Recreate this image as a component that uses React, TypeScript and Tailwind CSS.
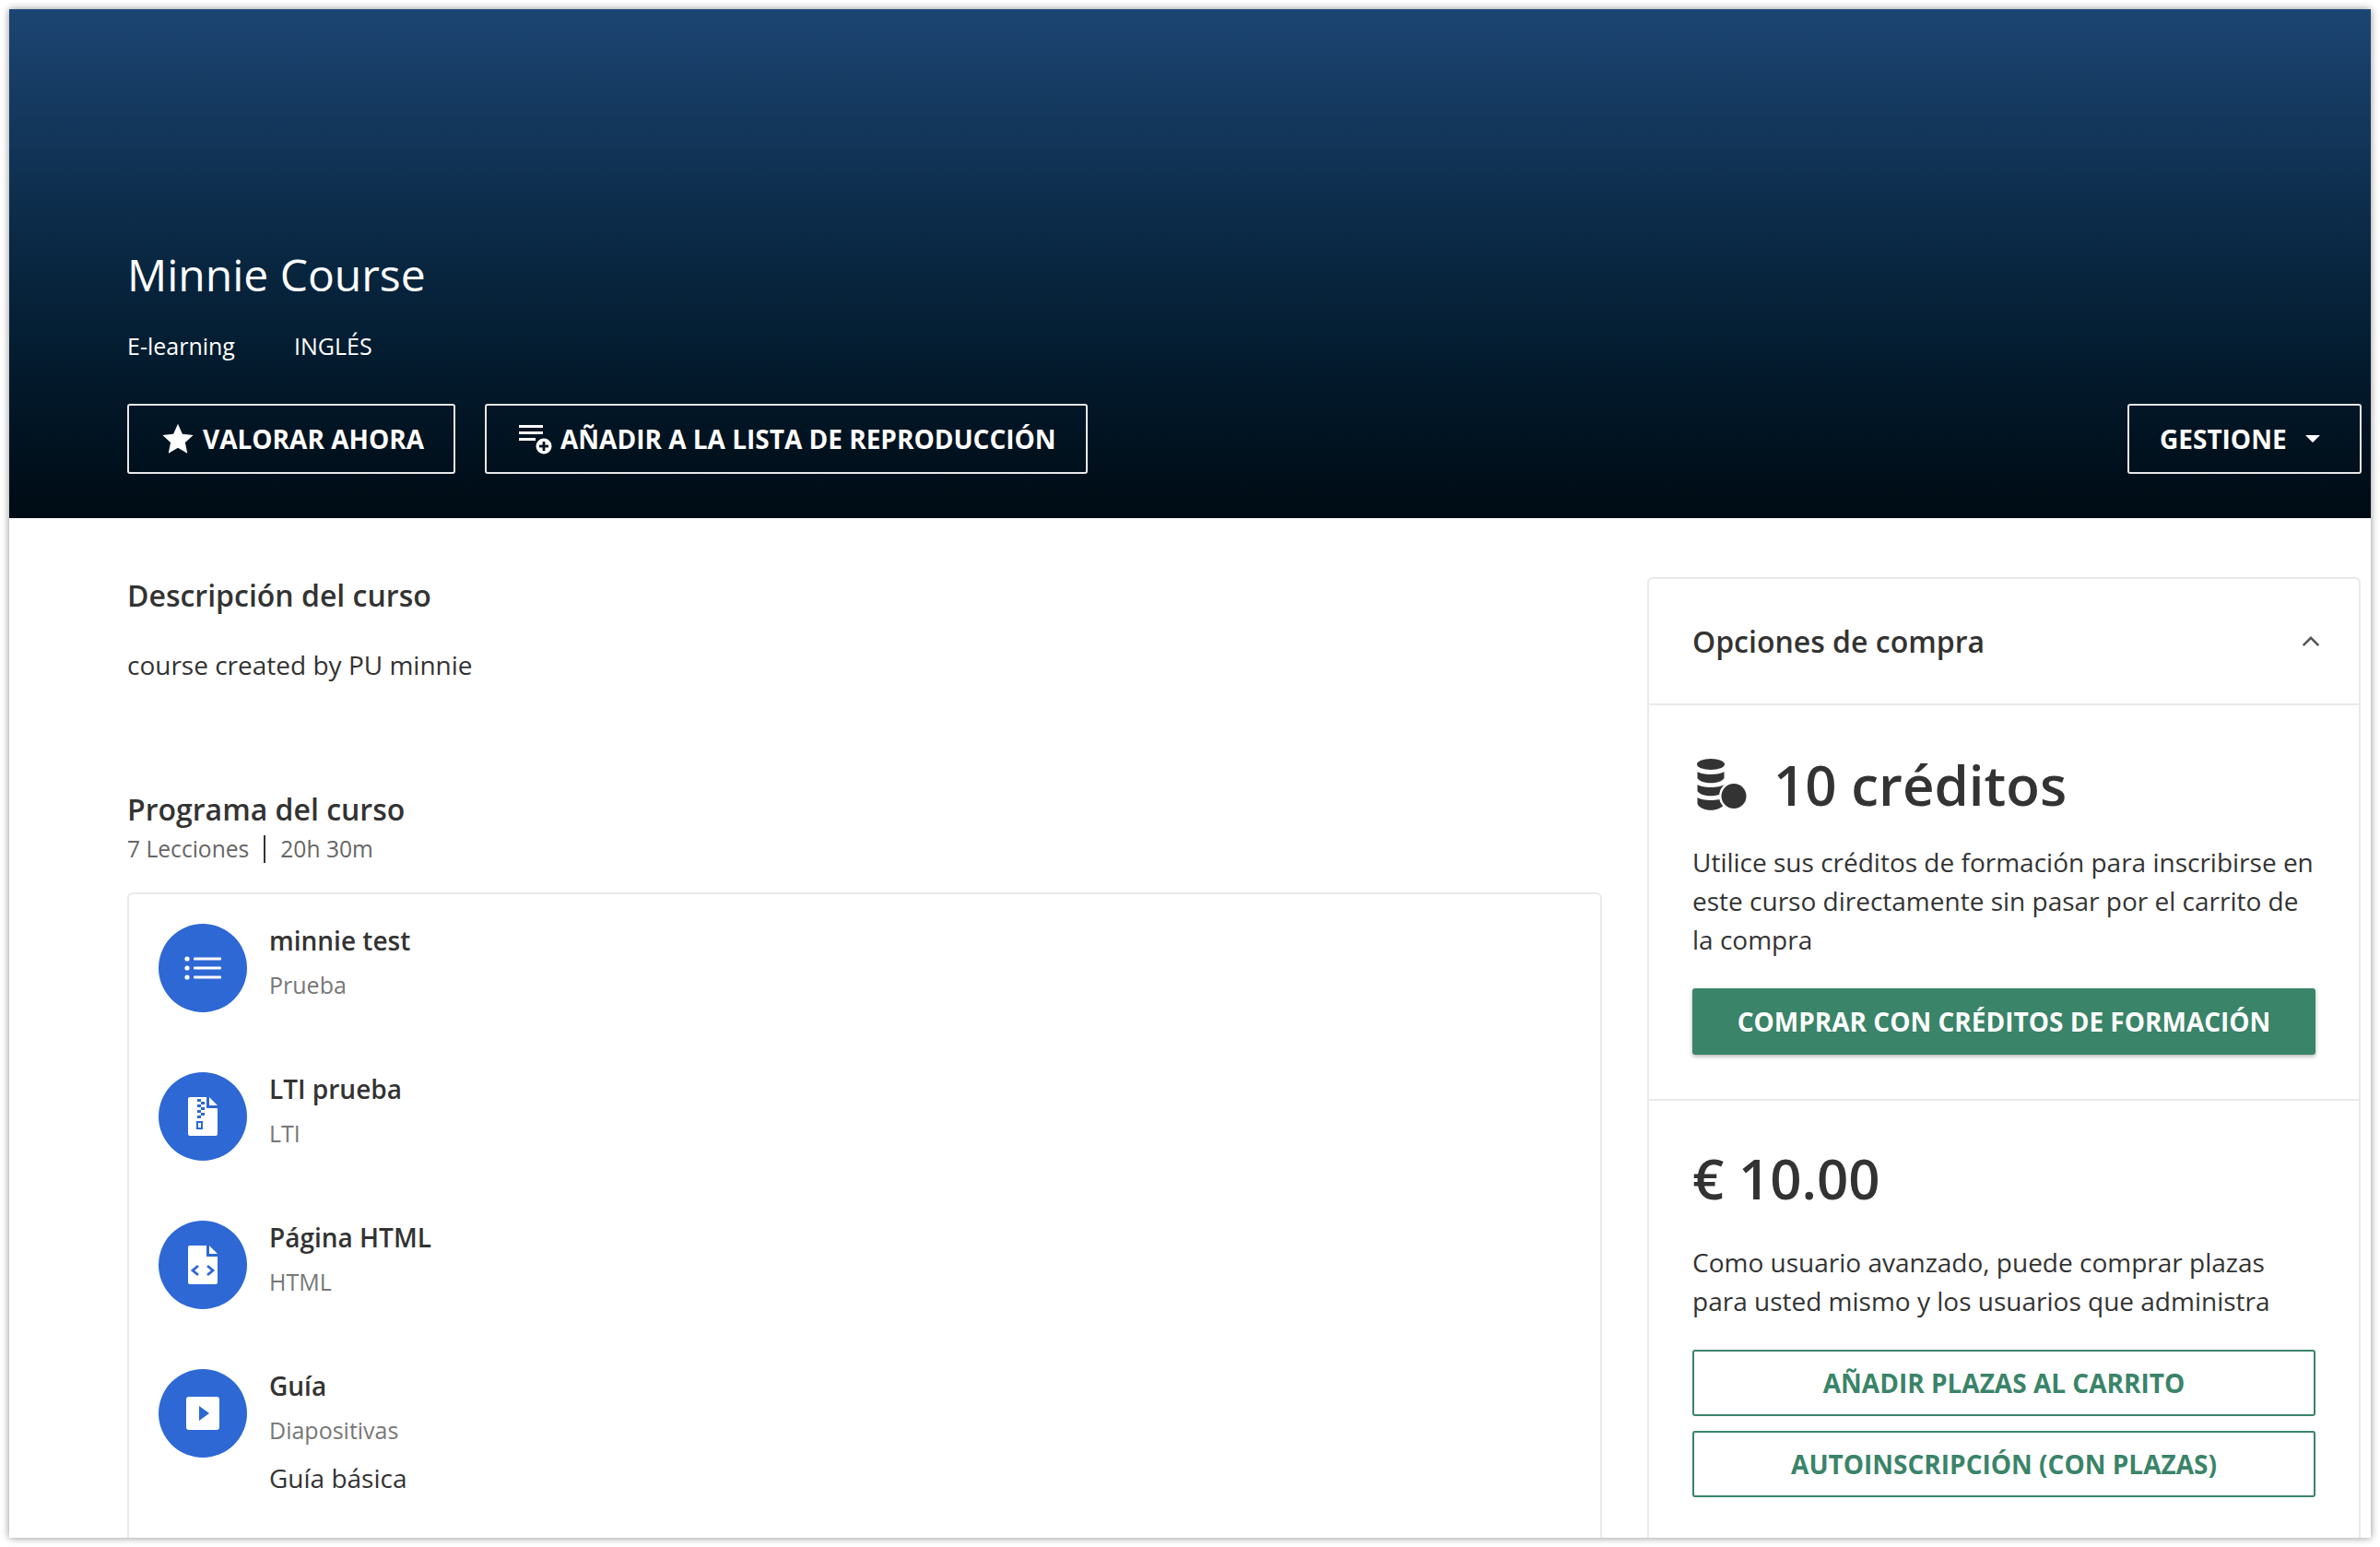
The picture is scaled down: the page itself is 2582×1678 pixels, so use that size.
const Star = () => (
  <svg viewBox="0 0 24 24" className="w-[38px] h-[38px] fill-white">
    <path d="M12 1.8l3.1 6.9 7.4.8-5.5 5 1.5 7.4L12 18.2l-6.5 3.7L7 14.5l-5.5-5 7.4-.8z" />
  </svg>
);

const PlaylistAdd = () => (
  <svg viewBox="0 0 36 36" className="w-[36px] h-[36px] fill-white">
    <rect x="0" y="3" width="26" height="3" />
    <rect x="0" y="10" width="26" height="3" />
    <rect x="0" y="17" width="18" height="3" />
    <circle cx="27" cy="26" r="8.5" />
    <rect x="22" y="24.6" width="10" height="2.8" fill="#04121f" />
    <rect x="25.6" y="21" width="2.8" height="10" fill="#04121f" />
  </svg>
);

const ListIcon = () => (
  <svg viewBox="0 0 40 26" className="w-[40px] h-[26px] fill-white">
    <circle cx="3" cy="3" r="2.6" />
    <rect x="10" y="1.5" width="30" height="3" rx="1" />
    <circle cx="3" cy="13" r="2.6" />
    <rect x="10" y="11.5" width="30" height="3" rx="1" />
    <circle cx="3" cy="23" r="2.6" />
    <rect x="10" y="21.5" width="30" height="3" rx="1" />
  </svg>
);

const ZipIcon = () => (
  <svg viewBox="0 0 32 42" className="w-[32px] h-[42px]">
    <path d="M2 0h18v12h12v28a2 2 0 0 1-2 2H2a2 2 0 0 1-2-2V2a2 2 0 0 1 2-2zM23 0l9 9h-9z" fill="#fff" />
    <path d="M10 2h4v3h-4zM14 5h4v3h-4zM10 8h4v3h-4zM14 11h4v3h-4zM10 14h4v3h-4zM14 17h4v3h-4zM10 20h4v3h-4z" fill="#2d68d4" />
    <path d="M9 26h7v9H9zM11 28v5h3v-5z" fill="#2d68d4" fillRule="evenodd" />
  </svg>
);

const CodeIcon = () => (
  <svg viewBox="0 0 32 42" className="w-[32px] h-[42px]">
    <path d="M2 0h18v12h12v28a2 2 0 0 1-2 2H2a2 2 0 0 1-2-2V2a2 2 0 0 1 2-2zM23 0l9 9h-9z" fill="#fff" />
    <path d="M11 22l-6 5 6 5M21 22l6 5-6 5" fill="none" stroke="#2d68d4" strokeWidth="2.8" />
  </svg>
);

const PlayIcon = () => (
  <svg viewBox="0 0 36 36" className="w-[36px] h-[36px]">
    <rect width="36" height="36" rx="3" fill="#fff" />
    <path d="M14 10l11 8-11 8z" fill="#2d68d4" />
  </svg>
);

const Coins = () => (
  <svg viewBox="0 0 56 56" className="w-[56px] h-[56px] fill-[#333333]">
    <ellipse cx="16" cy="6" rx="15" ry="6" />
    <path d="M1.5 14c5 4 24 4 29 0v7c-4 7-25 7-29 0z" />
    <path d="M1.5 28c5 4 24 4 29 0v7c-4 7-25 7-29 0z" />
    <path d="M1.5 42c5 4 24 4 29 0v7c-4 9-25 9-29 0z" />
    <circle cx="41" cy="40.5" r="16" fill="#fff" />
    <circle cx="41" cy="40.5" r="13.5" />
  </svg>
);

const lessons = [
  { title: "minnie test", kind: "Prueba", icon: <ListIcon /> },
  { title: "LTI prueba", kind: "LTI", icon: <ZipIcon /> },
  { title: "Página HTML", kind: "HTML", icon: <CodeIcon /> },
  { title: "Guía", kind: "Diapositivas", icon: <PlayIcon />, note: "Guía básica" },
];

const heroBtn =
  "h-[76px] flex items-center border-2 border-[#e6e8ea] rounded-[3px] text-white text-[28px] font-bold";
const outlineBtn =
  "h-[72px] flex items-center justify-center border-2 border-[#3a8469] rounded-[3px] text-[#3a8469] text-[28px] font-bold";

export default function App() {
  return (
    <div className="w-[2582px] h-[1678px] p-[10px] bg-white overflow-hidden font-['Open_Sans',sans-serif] text-[#333333]">
      <div className="h-[1658px] overflow-hidden bg-white shadow-[0_0_8px_rgba(0,0,0,0.45)]">
        <div className="h-[552px] px-[128px] pr-[10px] pb-[48px] flex flex-col justify-end bg-gradient-to-b from-[#1c4573] to-[#000b14]">
          <h1 className="text-[48px] leading-[64px] font-medium text-white">Minnie Course</h1>
          <div className="mt-[28px] flex gap-[64px] text-[25px] leading-[34px] text-white">
            <span>E-learning</span>
            <span>INGLÉS</span>
          </div>
          <div className="mt-[46px] flex">
            <button className={`${heroBtn} w-[356px] pl-[34px] gap-[8px]`}>
              <Star />
              VALORAR AHORA
            </button>
            <button className={`${heroBtn} w-[654px] ml-[32px] pl-[35px] gap-[9px]`}>
              <PlaylistAdd />
              AÑADIR A LA LISTA DE REPRODUCCIÓN
            </button>
            <button className={`${heroBtn} w-[254px] ml-auto pl-[33px]`}>
              GESTIONE
              <span className="ml-[20px] w-0 h-0 border-x-[8px] border-x-transparent border-t-[8px] border-t-white" />
            </button>
          </div>
        </div>

        <div className="flex pl-[128px] pr-[11px]">
          <div className="w-[1600px] pt-[62px]">
            <h2 className="text-[32px] leading-[44px] font-semibold">Descripción del curso</h2>
            <p className="mt-[32px] text-[28px] leading-[42px]">course created by PU minnie</p>
            <h2 className="mt-[114px] text-[32px] leading-[44px] font-semibold">Programa del curso</h2>
            <div className="mt-[4px] flex items-center text-[24.6px] leading-[34px] text-[#666666]">
              <span>7 Lecciones</span>
              <span className="mx-[16px] w-[2px] h-[30px] bg-[#333333]" />
              <span>20h 30m</span>
            </div>
            <div className="mt-[30px] h-[800px] border-2 border-[#e9e9e9] rounded-[6px] pl-[32px] pt-[32px]">
              {lessons.map((l) => (
                <div key={l.title} className="h-[161px] flex gap-[24px]">
                  <div className="w-[96px] h-[96px] rounded-full bg-[#2d68d4] flex items-center justify-center">
                    {l.icon}
                  </div>
                  <div>
                    <p className="text-[28px] leading-[36px] font-semibold">{l.title}</p>
                    <p className="mt-[13px] text-[25px] leading-[34px] text-[#777777]">{l.kind}</p>
                    {l.note && <p className="mt-[14px] text-[28px] leading-[42px]">{l.note}</p>}
                  </div>
                </div>
              ))}
            </div>
          </div>

          <div className="ml-[49px] w-[774px] mt-[64px] h-[1200px] border-2 border-[#e9e9e9] rounded-[6px]">
            <div className="h-[137px] pl-[47px] pr-[42px] flex items-center justify-between border-b-2 border-[#e9e9e9]">
              <span className="text-[32px] font-semibold">Opciones de compra</span>
              <svg viewBox="0 0 24 14" className="w-[20px] h-[12px] fill-none stroke-[#555555] stroke-[3]">
                <path d="M2 12l10-10 10 10" />
              </svg>
            </div>
            <div className="h-[429px] px-[47px] pt-[50px] border-b-2 border-[#e9e9e9]">
              <div className="flex items-center pl-[4px] gap-[28px]">
                <Coins />
                <span className="text-[60px] leading-[72px] font-semibold">10 créditos</span>
              </div>
              <p className="mt-[27px] text-[28px] leading-[42px]">
                Utilice sus créditos de formación para inscribirse en este curso directamente sin pasar por el carrito de la compra
              </p>
              <button className="mt-[32px] w-full h-[72px] bg-[#3a8469] rounded-[3px] text-white text-[28px] font-bold shadow-[0_2px_4px_rgba(0,0,0,0.3)]">
                COMPRAR CON CRÉDITOS DE FORMACIÓN
              </button>
            </div>
            <div className="px-[47px] pt-[48px]">
              <p className="text-[60px] leading-[72px] font-semibold">€ 10.00</p>
              <p className="mt-[34px] text-[28px] leading-[42px]">
                Como usuario avanzado, puede comprar plazas para usted mismo y los usuarios que administra
              </p>
              <button className={`${outlineBtn} mt-[32px] w-full`}>AÑADIR PLAZAS AL CARRITO</button>
              <button className={`${outlineBtn} mt-[16px] w-full`}>AUTOINSCRIPCIÓN (CON PLAZAS)</button>
            </div>
          </div>
        </div>
      </div>
    </div>
  );
}
